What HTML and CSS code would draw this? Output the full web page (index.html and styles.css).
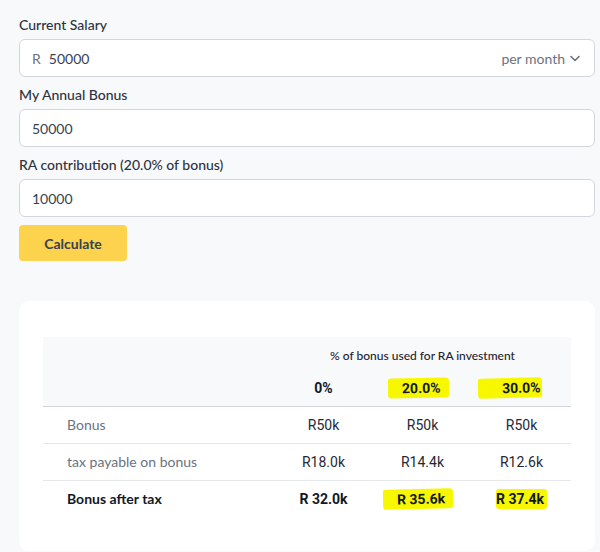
FILE: index.html
```html
<!DOCTYPE html>
<html>
<head>
<meta charset="utf-8">
<link rel="stylesheet" href="styles.css">
</head>
<body>
<div class="page">
  <form class="form">
    <div class="field">
      <label class="label">Current Salary</label>
      <div class="input">
        <span class="prefix">R</span>
        <span class="value">50000</span>
        <span class="period">per month
          <svg class="chev" width="10" height="7" viewBox="0 0 10 7"><path d="M1 1.5 L5 5.5 L9 1.5" fill="none" stroke="#6b7280" stroke-width="1.6" stroke-linecap="round" stroke-linejoin="round"/></svg>
        </span>
      </div>
    </div>
    <div class="field">
      <label class="label">My Annual Bonus</label>
      <div class="input"><span class="value">50000</span></div>
    </div>
    <div class="field">
      <label class="label">RA contribution (20.0% of bonus)</label>
      <div class="input"><span class="value">10000</span></div>
    </div>
    <div class="actions">
      <button type="button" class="btn">Calculate</button>
    </div>
  </form>

  <div class="card">
    <table class="tbl">
      <thead>
        <tr class="h1">
          <th></th>
          <th colspan="3" class="cap">% of bonus used for RA investment</th>
        </tr>
        <tr class="h2">
          <th></th>
          <th class="num"><span class="pct">0%</span></th>
          <th class="num"><span class="pct mark m1">20.0%</span></th>
          <th class="num"><span class="pct mark m2">30.0%</span></th>
        </tr>
      </thead>
      <tbody>
        <tr>
          <td class="lbl">Bonus</td>
          <td class="num">R50k</td>
          <td class="num">R50k</td>
          <td class="num">R50k</td>
        </tr>
        <tr>
          <td class="lbl">tax payable on bonus</td>
          <td class="num">R18.0k</td>
          <td class="num">R14.4k</td>
          <td class="num">R12.6k</td>
        </tr>
        <tr class="total">
          <td class="lbl">Bonus after tax</td>
          <td class="num">R 32.0k</td>
          <td class="num"><span class="mark m3">R 35.6k</span></td>
          <td class="num"><span class="mark m4">R 37.4k</span></td>
        </tr>
      </tbody>
    </table>
  </div>
</div>
</body>
</html>
```
FILE: styles.css
```css
* { box-sizing: border-box; }
html, body { margin: 0; padding: 0; }
body {
  background: #f8f9fb;
  font-family: "Lato", "Noto Sans", sans-serif;
  color: #2d3340;
  width: 600px;
  height: 552px;
  overflow: hidden;
}
.page {
  padding: 15px 5px 0 19px;
}
.form {
  display: flex;
  flex-direction: column;
  gap: 8px;
}
.field {
  display: flex;
  flex-direction: column;
  gap: 4px;
}
.label {
  font-size: 14px;
  line-height: 20px;
  font-weight: 500;
  color: #2d3340;
}
.input {
  height: 38px;
  background: #fff;
  border: 1px solid #d4d6dd;
  border-radius: 6px;
  display: flex;
  align-items: center;
  padding: 0 14px 0 12px;
  font-size: 14px;
}
.prefix {
  color: #6b7280;
  margin-right: 8px;
}
.value {
  color: #374151;
  flex: 1;
}
.period {
  color: #6b7280;
  display: flex;
  align-items: center;
  gap: 5px;
}
.chev { display: block; }
.actions { display: flex; }
.btn {
  width: 108px;
  height: 36px;
  background: #fdd24c;
  border: none;
  border-radius: 4px;
  font-family: "Lato", "Noto Sans", sans-serif;
  font-size: 14px;
  font-weight: 700;
  color: #374151;
  padding: 0;
}
.card {
  margin-top: 40px;
  background: #fff;
  border-radius: 10px;
  padding: 36px 24px 34px 24px;
}
.tbl {
  width: 100%;
  border-collapse: collapse;
  font-size: 14px;
}
.tbl thead tr { background: #f8f9fb; }
.tbl th { font-weight: 700; padding: 0; }
.h1 th { height: 34px; }
.h2 th { height: 35px; border-bottom: 1px solid #d1d4dc; }
.cap {
  font-size: 12px;
  font-weight: 500 !important;
  color: #1f2430;
  text-align: center;
  padding-top: 2px !important;
}
.pct {
  font-size: 14px;
  color: #111827;
}
.tbl td {
  height: 37px;
  padding: 0;
  border-bottom: 1px solid #e5e7eb;
}
.tbl tbody tr:last-child td { border-bottom: none; }
.lbl {
  padding-left: 24px !important;
  color: #6b7280;
  text-align: left;
}
.num {
  width: 99px;
  text-align: center;
  color: #1f2937;
  font-family: "Roboto", "Noto Sans", sans-serif;
}
.h2 .num { font-family: "Roboto", sans-serif; }
.total .lbl { color: #111827; font-weight: 700; }
.total .num { font-weight: 700; color: #111827; }
.mark {
  background: #f7f700;
  border-radius: 3px;
  display: inline-block;
}
.m1 { padding: 2px 8px 2px 14px; margin-left: -8px; transform: rotate(-1deg); }
.m2 { padding: 2px 1px 2px 24px; margin-left: -24px; transform: rotate(-1.5deg); }
.m3 { padding: 2px 8px 2px 14px; margin-left: -8px; transform: rotate(-1.5deg); }
.m4 { padding: 2px 3px 2px 0; }
```
